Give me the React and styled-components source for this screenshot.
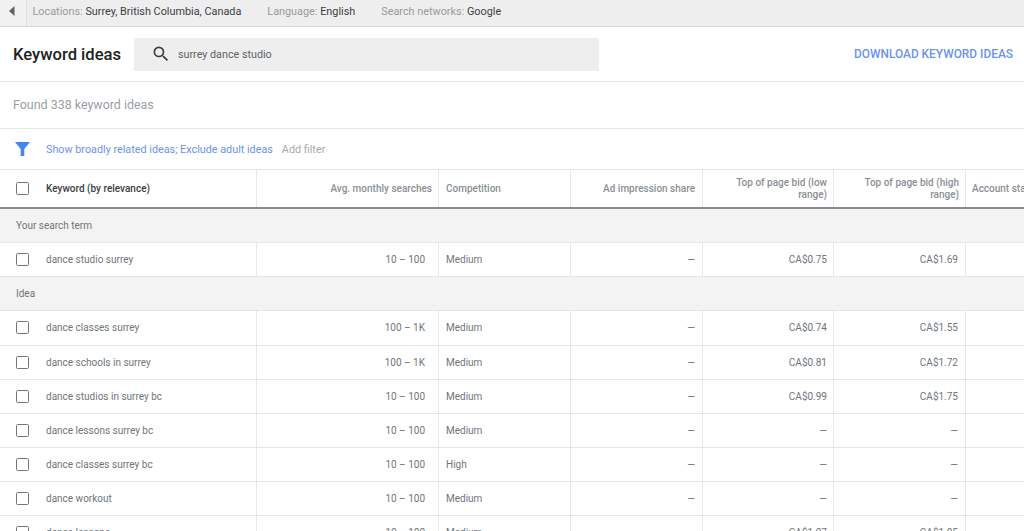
import React from "react";
import styled, { createGlobalStyle } from "styled-components";

const Global = createGlobalStyle`
  html, body { margin: 0; padding: 0; height: 100%; overflow: hidden; background: #fff; }
  body { font-family: Roboto, "Liberation Sans", sans-serif; }
`;
const Page = styled.div`width: 1024px; height: 531px; overflow: hidden; background: #fff;`;
const TopBar = styled.div`
  display: flex; height: 26px; background: #eeeeee; border-bottom: 1px solid #d9d9d9; box-sizing: content-box;
`;
const BackButton = styled.div`
  width: 27px; display: flex; align-items: center; justify-content: center;
  background: #f1f1f1; border-right: 1px solid #e0e0e0; box-sizing: border-box; padding: 0 3px 4px 0;
`;
const Crumbs = styled.div`display: flex; align-items: center; padding: 0 0 3px 5.5px; font-size: 10.85px;`;
const Crumb = styled.span`margin-right: ${p => p.$gap}px; color: #9a9a9a; white-space: nowrap;`;
const CrumbValue = styled.span`color: #3c4043;`;
const Header = styled.div`
  display: flex; align-items: center; height: 54px; border-bottom: 1px solid #e6e6e6; padding: 0 11px 0 13px;
`;
const Title = styled.h1`margin: 0; width: 121px; font-size: 16.6px; font-weight: 500; color: #202124; white-space: nowrap;`;
const Search = styled.div`
  display: flex; align-items: center; width: 465px; height: 33px; background: #eeeeee; padding-left: 17px; box-sizing: border-box;
  font-size: 10.75px; color: #5f6368;
  svg { margin-right: 7px; }
`;
const Download = styled.a`margin-left: auto; font-size: 11.9px; font-weight: 500; color: #6b93ee; white-space: nowrap;`;
const Found = styled.div`
  display: flex; align-items: center; height: 47px; padding: 0 0 1px 13px; box-sizing: border-box; border-bottom: 1px solid #e6e6e6;
  font-size: 12.45px; color: #9aa0a6;
`;
const FilterBar = styled.div`
  display: flex; align-items: center; height: 40px; padding-left: 15px; border-bottom: 1px solid #e6e6e6; font-size: 10.8px;
`;
const FilterLinks = styled.span`margin-left: 16px; color: #6b93ee; white-space: nowrap;`;
const AddFilter = styled.span`margin-left: 9px; color: #aaaaaa;`;
const columns = "257px 182px 132px 132px 131px 132px 1fr";
const HeadRow = styled.div`
  display: grid; grid-template-columns: ${columns}; height: 37px; border-bottom: 2px solid #8a8a8a; box-sizing: content-box;
`;
const Row = styled.div`
  display: grid; grid-template-columns: ${columns}; height: 34.15px; box-sizing: border-box; border-bottom: 1px solid #e6e6e6;
`;
const Group = styled.div`
  display: flex; align-items: center; height: 34.15px; box-sizing: border-box; padding-left: 16px;
  background: #f3f3f3; border-bottom: 1px solid #e6e6e6; font-size: 10px; color: #70757a;
`;
const Cell = styled.div`
  display: flex; align-items: center; justify-content: ${p => p.$left ? "flex-start" : "flex-end"};
  box-sizing: border-box; border-right: ${p => p.$last ? "none" : "1px solid #e8e8e8"};
  padding: ${p => p.$pad || "0 7px"}; font-size: 10px; color: #70757a; white-space: nowrap; min-width: 0;
`;
const HeadCell = styled(Cell)`
  font-weight: 500; color: #8b8f94; text-align: right; white-space: normal; line-height: 12px;
`;
const KeywordHead = styled(HeadCell)`color: #3c4043; white-space: nowrap;`;
const Box = styled.span`
  width: 13px; height: 13px; border: 1.5px solid #757575; border-radius: 1.5px; box-sizing: border-box;
  margin-right: 17px; flex: none;
`;
const Overflow = styled(HeadCell)`white-space: nowrap; overflow: hidden;`;

const rows = [
  ["dance classes surrey", "100 – 1K", "Medium", "CA$0.74", "CA$1.55"],
  ["dance schools in surrey", "100 – 1K", "Medium", "CA$0.81", "CA$1.72"],
  ["dance studios in surrey bc", "10 – 100", "Medium", "CA$0.99", "CA$1.75"],
  ["dance lessons surrey bc", "10 – 100", "Medium", "—", "—"],
  ["dance classes surrey bc", "10 – 100", "High", "—", "—"],
  ["dance workout", "10 – 100", "Medium", "—", "—"],
  ["dance lessons", "10 – 100", "Medium", "CA$1.07", "CA$1.05"],
];

const DataRow = ({ r }) => (
  <Row>
    <Cell $left $pad="0 0 0 16px"><Box />{r[0]}</Cell>
    <Cell $pad="0 13px 0 0">{r[1]}</Cell>
    <Cell $left>{r[2]}</Cell>
    <Cell>—</Cell>
    <Cell $pad="0 6px">{r[3]}</Cell>
    <Cell $pad="0 7px">{r[4]}</Cell>
    <Cell $last />
  </Row>
);

export default function App() {
  return (
    <Page>
      <Global />
      <TopBar>
        <BackButton>
          <svg width="6" height="10" viewBox="0 0 6 10"><path d="M5.5 0v10L0 5z" fill="#5f6368" /></svg>
        </BackButton>
        <Crumbs>
          <Crumb $gap={26}>Locations: <CrumbValue>Surrey, British Columbia, Canada</CrumbValue></Crumb>
          <Crumb $gap={26}>Language: <CrumbValue>English</CrumbValue></Crumb>
          <Crumb $gap={0}>Search networks: <CrumbValue>Google</CrumbValue></Crumb>
        </Crumbs>
      </TopBar>
      <Header>
        <Title>Keyword ideas</Title>
        <Search>
          <svg width="20" height="20" viewBox="0 0 24 24"><path fill="#3c4043" d="M15.5 14h-.79l-.28-.27A6.47 6.47 0 0 0 16 9.5 6.5 6.5 0 1 0 9.5 16c1.61 0 3.09-.59 4.23-1.57l.27.28v.79l5 4.99L20.49 19l-4.99-5zm-6 0C7.01 14 5 11.99 5 9.5S7.01 5 9.5 5 14 7.01 14 9.5 11.99 14 9.5 14z" /></svg>
          surrey dance studio
        </Search>
        <Download>DOWNLOAD KEYWORD IDEAS</Download>
      </Header>
      <Found>Found 338 keyword ideas</Found>
      <FilterBar>
        <svg width="15" height="14" viewBox="0 0 15 14"><path fill="#4285f4" d="M0 0h15L9.3 7v7H5.7V7z" /></svg>
        <FilterLinks>Show broadly related ideas; Exclude adult ideas</FilterLinks>
        <AddFilter>Add filter</AddFilter>
      </FilterBar>
      <HeadRow>
        <KeywordHead $left $pad="0 0 0 16px"><Box />Keyword (by relevance)</KeywordHead>
        <HeadCell $pad="0 6px 0 0">Avg. monthly searches</HeadCell>
        <HeadCell $left>Competition</HeadCell>
        <HeadCell>Ad impression share</HeadCell>
        <HeadCell $pad="0 6px">Top of page bid (low range)</HeadCell>
        <HeadCell $pad="0 6px">Top of page bid (high range)</HeadCell>
        <Overflow $left $last $pad="0 6px">Account status</Overflow>
      </HeadRow>
      <Group>Your search term</Group>
      <DataRow r={["dance studio surrey", "10 – 100", "Medium", "CA$0.75", "CA$1.69"]} />
      <Group>Idea</Group>
      {rows.map(r => <DataRow key={r[0]} r={r} />)}
    </Page>
  );
}
